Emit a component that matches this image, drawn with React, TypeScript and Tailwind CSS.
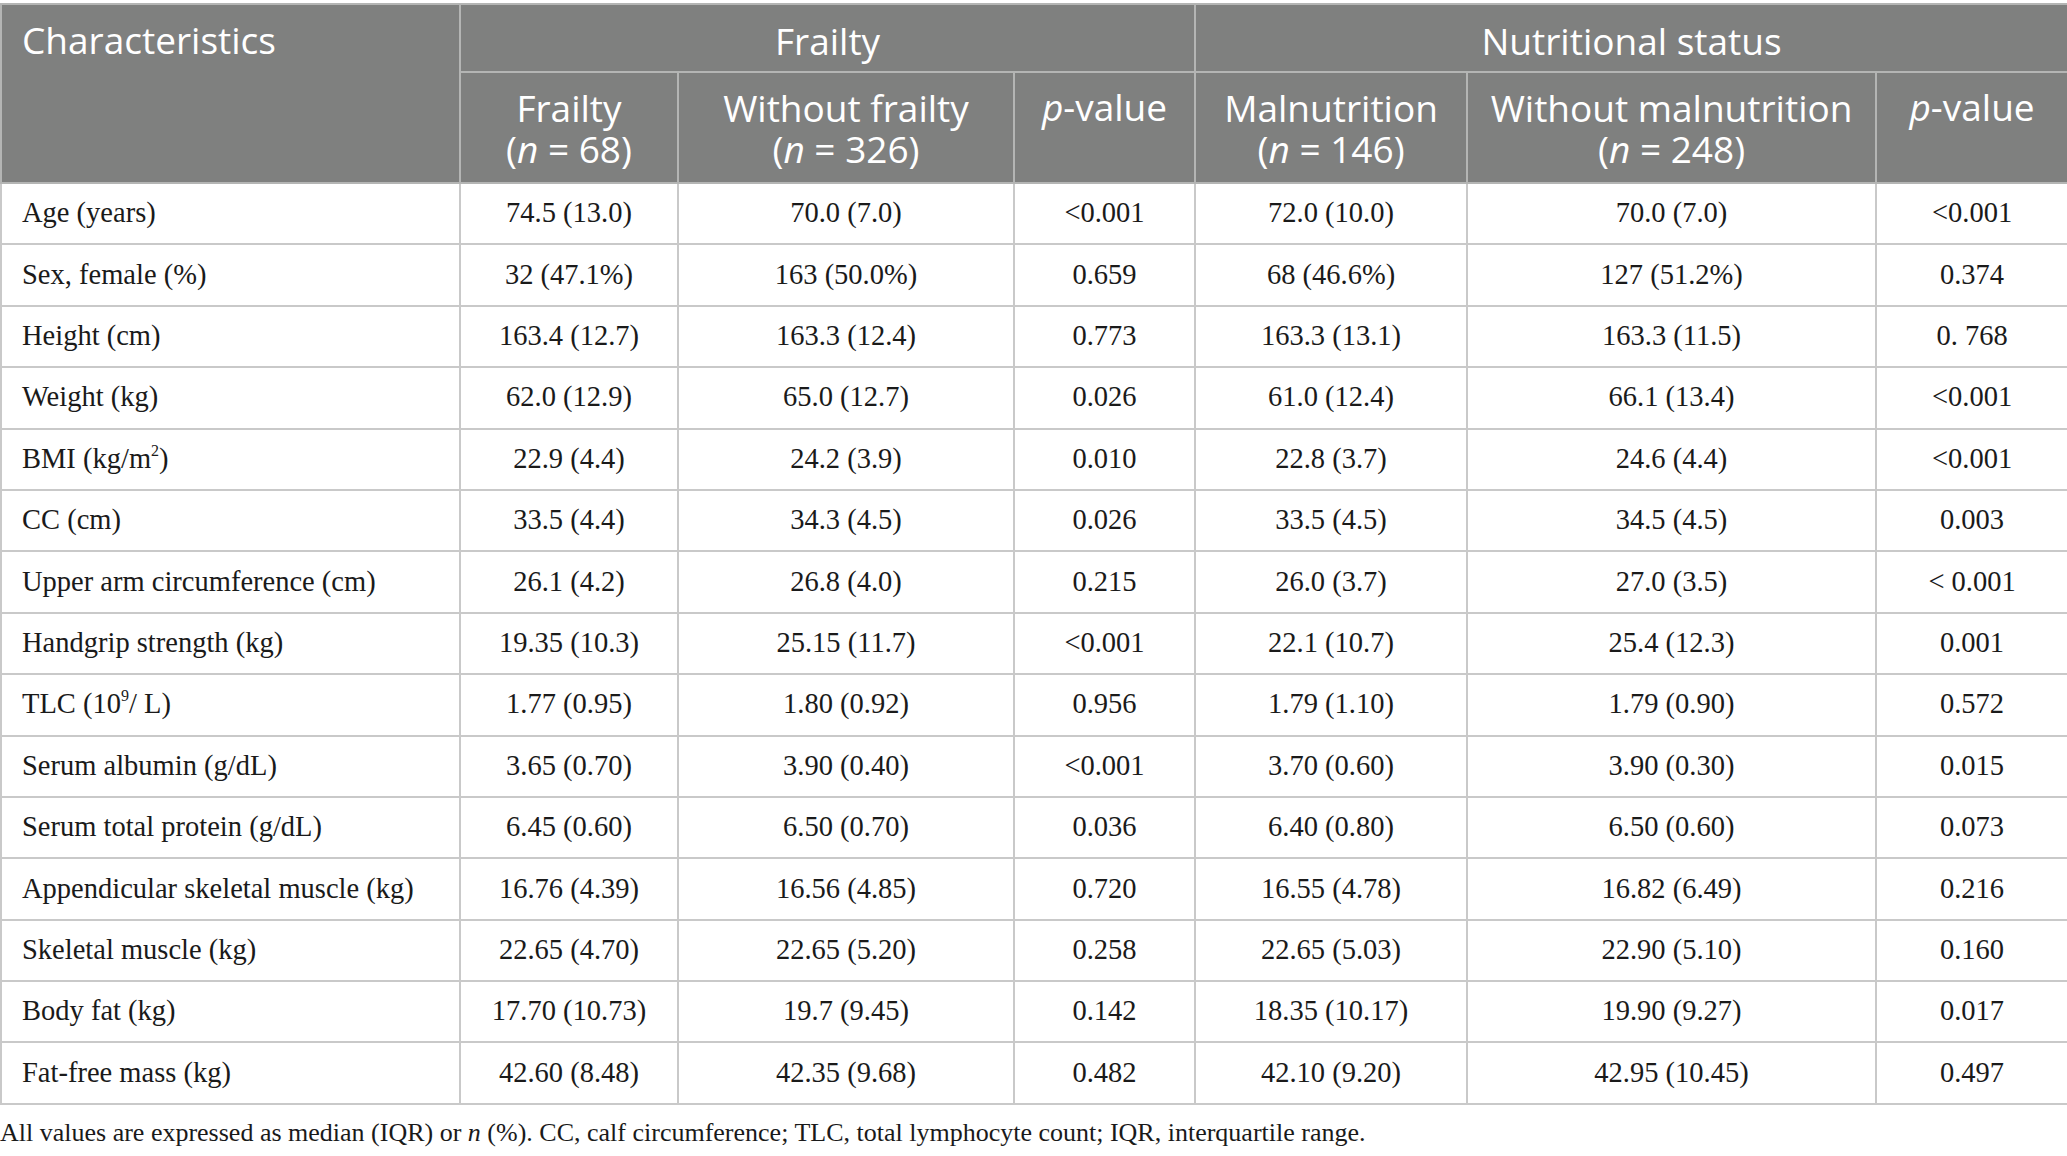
import type { ReactNode } from 'react';

type Row = {
  label: ReactNode;
  values: string[];
};

const ROWS: Row[] = [
  { label: 'Age (years)', values: ['74.5 (13.0)', '70.0 (7.0)', '<0.001', '72.0 (10.0)', '70.0 (7.0)', '<0.001'] },
  { label: 'Sex, female (%)', values: ['32 (47.1%)', '163 (50.0%)', '0.659', '68 (46.6%)', '127 (51.2%)', '0.374'] },
  { label: 'Height (cm)', values: ['163.4 (12.7)', '163.3 (12.4)', '0.773', '163.3 (13.1)', '163.3 (11.5)', '0. 768'] },
  { label: 'Weight (kg)', values: ['62.0 (12.9)', '65.0 (12.7)', '0.026', '61.0 (12.4)', '66.1 (13.4)', '<0.001'] },
  {
    label: (
      <>
        BMI (kg/m<sup className="text-[16px] top-[-0.75em]">2</sup>)
      </>
    ),
    values: ['22.9 (4.4)', '24.2 (3.9)', '0.010', '22.8 (3.7)', '24.6 (4.4)', '<0.001'],
  },
  { label: 'CC (cm)', values: ['33.5 (4.4)', '34.3 (4.5)', '0.026', '33.5 (4.5)', '34.5 (4.5)', '0.003'] },
  { label: 'Upper arm circumference (cm)', values: ['26.1 (4.2)', '26.8 (4.0)', '0.215', '26.0 (3.7)', '27.0 (3.5)', '< 0.001'] },
  { label: 'Handgrip strength (kg)', values: ['19.35 (10.3)', '25.15 (11.7)', '<0.001', '22.1 (10.7)', '25.4 (12.3)', '0.001'] },
  {
    label: (
      <>
        TLC (10<sup className="text-[16px] top-[-0.75em]">9</sup>/ L)
      </>
    ),
    values: ['1.77 (0.95)', '1.80 (0.92)', '0.956', '1.79 (1.10)', '1.79 (0.90)', '0.572'],
  },
  { label: 'Serum albumin (g/dL)', values: ['3.65 (0.70)', '3.90 (0.40)', '<0.001', '3.70 (0.60)', '3.90 (0.30)', '0.015'] },
  { label: 'Serum total protein (g/dL)', values: ['6.45 (0.60)', '6.50 (0.70)', '0.036', '6.40 (0.80)', '6.50 (0.60)', '0.073'] },
  { label: 'Appendicular skeletal muscle (kg)', values: ['16.76 (4.39)', '16.56 (4.85)', '0.720', '16.55 (4.78)', '16.82 (6.49)', '0.216'] },
  { label: 'Skeletal muscle (kg)', values: ['22.65 (4.70)', '22.65 (5.20)', '0.258', '22.65 (5.03)', '22.90 (5.10)', '0.160'] },
  { label: 'Body fat (kg)', values: ['17.70 (10.73)', '19.7 (9.45)', '0.142', '18.35 (10.17)', '19.90 (9.27)', '0.017'] },
  { label: 'Fat-free mass (kg)', values: ['42.60 (8.48)', '42.35 (9.68)', '0.482', '42.10 (9.20)', '42.95 (10.45)', '0.497'] },
];

const headCell = 'border-2 border-[#b4b5b4] text-white font-normal';
const bodyCell = 'border-2 border-[#c9c9c9] text-center';

function Sub({ title, n }: { title: string; n: string }) {
  return (
    <>
      <div>{title}</div>
      <div>
        (<i>n</i> = {n})
      </div>
    </>
  );
}

export default function App() {
  return (
    <div className="w-[2067px] bg-white pt-[3px]">
      <table
        className="w-[2067px] table-fixed border-collapse border-2 border-[#c9c9c9]"
        style={{ fontFamily: '"Liberation Serif", "Times New Roman", serif' }}
      >
        <colgroup>
          <col className="w-[459px]" />
          <col className="w-[218px]" />
          <col className="w-[336px]" />
          <col className="w-[181px]" />
          <col className="w-[272px]" />
          <col className="w-[409px]" />
          <col className="w-[192px]" />
        </colgroup>
        <thead
          className="bg-[#7f807f] text-[37px] leading-[41px]"
          style={{ fontFamily: '"Open Sans", "Noto Sans", sans-serif' }}
        >
          <tr className="h-[68px]">
            <th rowSpan={2} className={`${headCell} align-top text-left pl-[20px] pt-[14px]`}>
              Characteristics
            </th>
            <th colSpan={3} className={`${headCell} text-center pt-[4px]`}>
              Frailty
            </th>
            <th colSpan={3} className={`${headCell} text-center pt-[4px]`}>
              Nutritional status
            </th>
          </tr>
          <tr className="h-[111px]">
            <th className={`${headCell} text-center`}>
              <Sub title="Frailty" n="68" />
            </th>
            <th className={`${headCell} text-center`}>
              <Sub title="Without frailty" n="326" />
            </th>
            <th className={`${headCell} text-center align-top pt-[13px]`}>
              <i>p</i>-value
            </th>
            <th className={`${headCell} text-center`}>
              <Sub title="Malnutrition" n="146" />
            </th>
            <th className={`${headCell} text-center`}>
              <Sub title="Without malnutrition" n="248" />
            </th>
            <th className={`${headCell} text-center align-top pt-[13px]`}>
              <i>p</i>-value
            </th>
          </tr>
        </thead>
        <tbody className="text-[28.5px] text-[#1a1a1a]">
          {ROWS.map((row, i) => (
            <tr key={i} className="h-[61.4px]">
              <td className="border-2 border-[#c9c9c9] text-left pl-[20px]">{row.label}</td>
              {row.values.map((v, j) => (
                <td key={j} className={bodyCell}>
                  {v}
                </td>
              ))}
            </tr>
          ))}
        </tbody>
      </table>
      <p
        className="mt-[13px] text-[26px] text-[#1a1a1a] leading-[30px]"
        style={{ fontFamily: '"Liberation Serif", "Times New Roman", serif' }}
      >
        All values are expressed as median (IQR) or <i>n</i> (%). CC, calf circumference; TLC, total lymphocyte count;
        IQR, interquartile range.
      </p>
    </div>
  );
}
